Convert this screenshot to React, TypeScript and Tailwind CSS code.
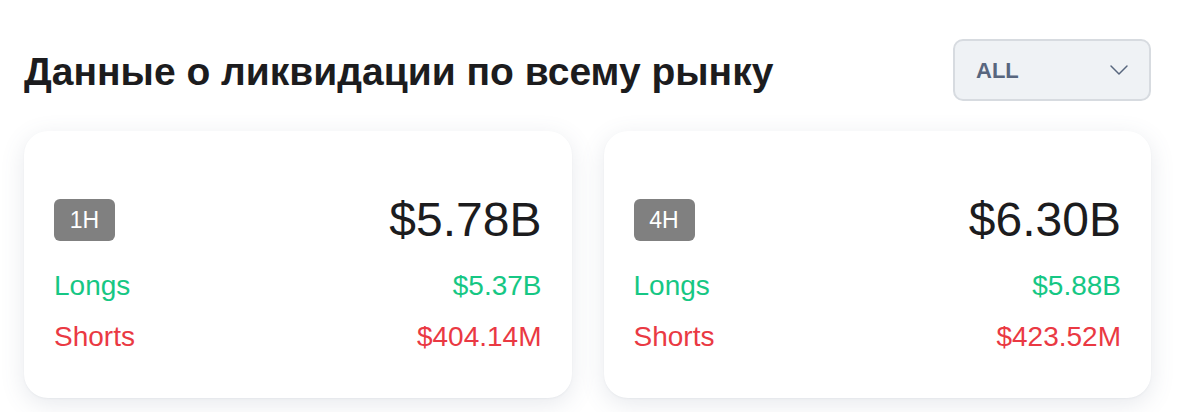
import { ChevronDown } from "lucide-react";

interface StatCardProps {
  period: string;
  total: string;
  longs: string;
  shorts: string;
}

const StatCard = ({ period, total, longs, shorts }: StatCardProps) => {
  return (
    <div className="flex flex-col rounded-[24px] bg-white px-[30px] pt-[63px] pb-[45px] shadow-[0_6px_24px_rgba(88,102,126,0.14),0_1px_2px_rgba(88,102,126,0.06)]">
      <div className="flex h-[52px] items-center justify-between">
        <span className="flex h-[42px] w-[61px] items-center justify-center rounded-[6px] bg-[#808080] text-[23px] text-white">
          {period}
        </span>
        <span className="text-[48px] leading-[52px] text-[#1c1c1e]">{total}</span>
      </div>
      <div className="mt-6 flex justify-between text-[28px] leading-[32px] text-[#16c784]">
        <span>Longs</span>
        <span>{longs}</span>
      </div>
      <div className="mt-[19px] flex justify-between text-[28px] leading-[32px] text-[#ea3943]">
        <span>Shorts</span>
        <span>{shorts}</span>
      </div>
    </div>
  );
};

const App = () => {
  return (
    <div className="min-h-screen bg-white pl-6 pr-[35px] pt-[39px] font-['Liberation_Sans',Arial,sans-serif]">
      <div className="flex items-center justify-between">
        <h1 className="mt-1 text-[39px] font-bold leading-[46px] text-[#1c1c1e]">
          Данные о ликвидации по всему рынку
        </h1>
        <button className="flex h-[62px] w-[198px] items-center justify-between rounded-[10px] border-2 border-[#d7dbe0] bg-[#eff2f5] pl-[21px] pr-[14px] text-[22px] font-bold text-[#58667e]">
          ALL
          <ChevronDown size={32} strokeWidth={1.1} className="text-[#58667e]" />
        </button>
      </div>
      <div className="mt-[30px] grid grid-cols-2 gap-8">
        <StatCard period="1H" total="$5.78B" longs="$5.37B" shorts="$404.14M" />
        <StatCard period="4H" total="$6.30B" longs="$5.88B" shorts="$423.52M" />
      </div>
    </div>
  );
};

export default App;
